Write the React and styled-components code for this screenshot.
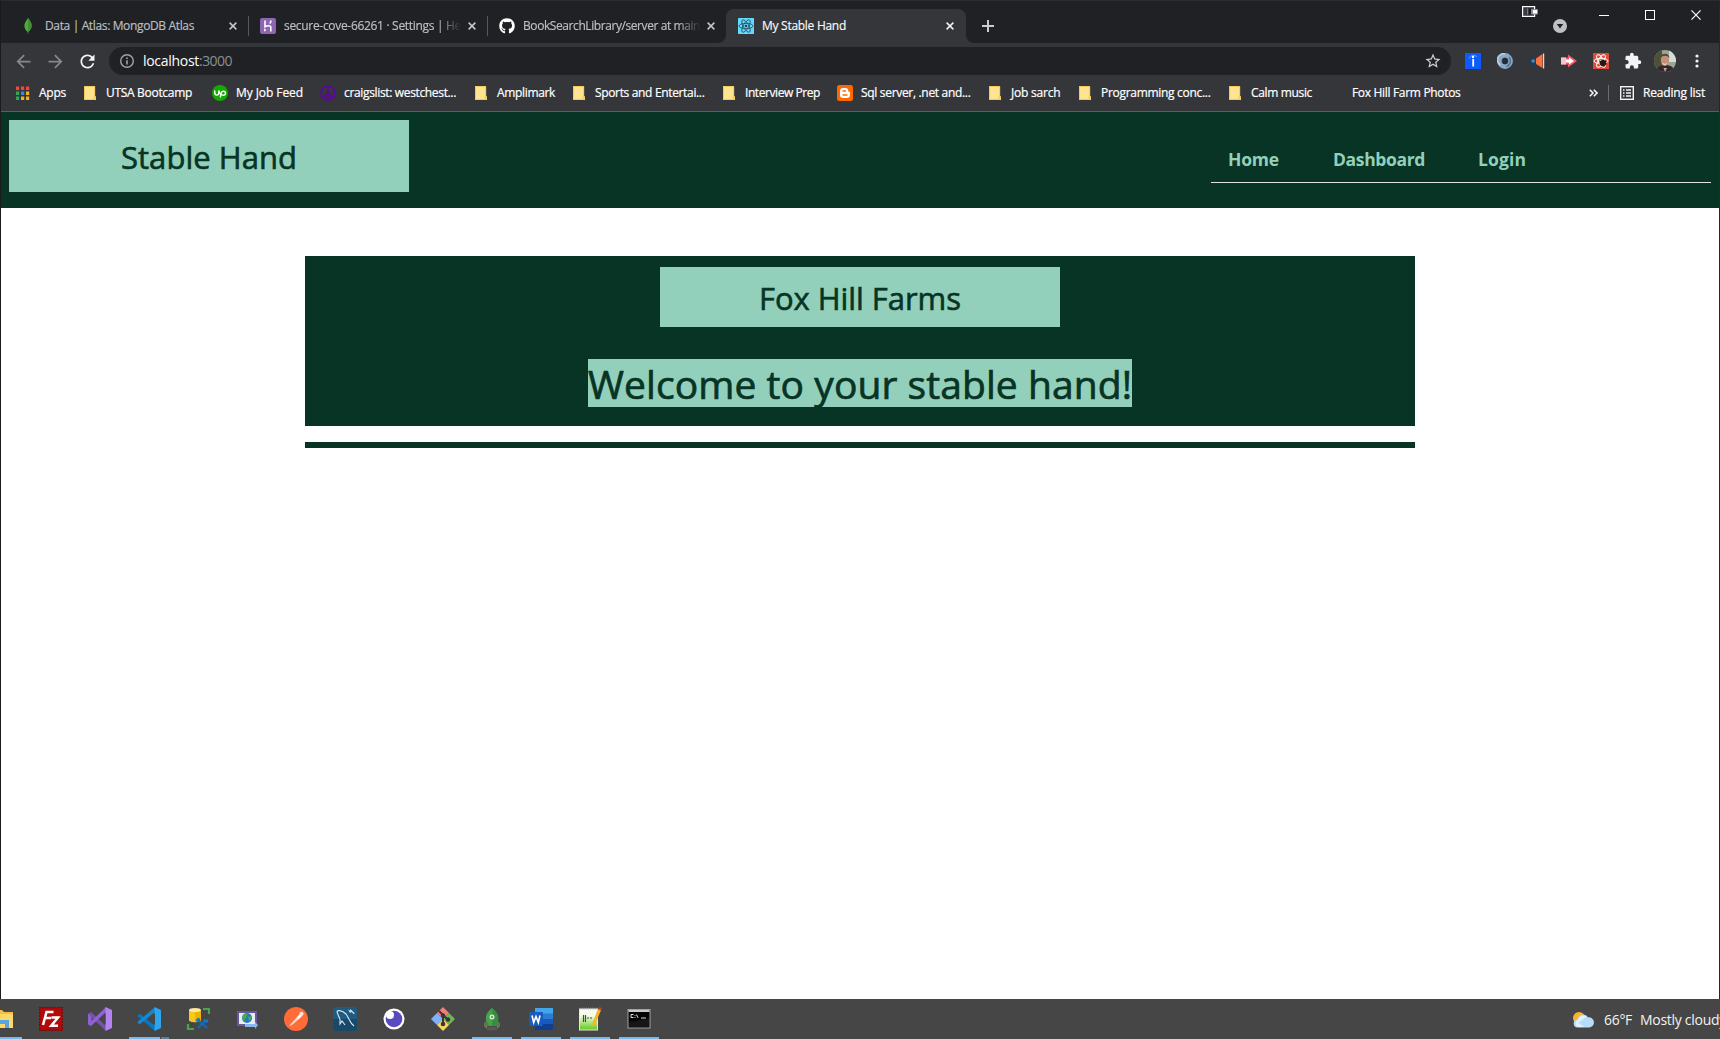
import React, { useLayoutEffect, useRef, useState } from "react";
import styled, { createGlobalStyle } from "styled-components";
import { FaGithub } from "react-icons/fa";
import { MdExtension, MdStarBorder, MdRefresh, MdArrowBack, MdArrowForward } from "react-icons/md";

const GlobalStyle = createGlobalStyle`
  * { box-sizing: border-box; }
  html, body { margin: 0; height: 100%; overflow: hidden; background: #fff; }
  body, #root { font-family: "Segoe UI", "Open Sans", "Noto Sans", sans-serif; }
  svg { display: block; flex: none; }
`;

const FitSpan = styled.span`
  display: inline-block;
  white-space: pre;
`;

/* Tracks the text so that it is as wide as the column made for it. */
function Fit({ width, children }) {
  const ref = useRef(null);
  const [tracking, setTracking] = useState(0);
  useLayoutEffect(() => {
    const natural = ref.current.getBoundingClientRect().width;
    setTracking((width - natural) / String(children).length);
  }, [width, children]);
  return (
    <FitSpan ref={ref} style={{ letterSpacing: `${tracking}px` }}>
      {children}
    </FitSpan>
  );
}

const Screen = styled.div`
  width: 1720px;
  height: 1039px;
  display: flex;
  flex-direction: column;
  overflow: hidden;
`;

const Browser = styled.div`
  height: 999px;
  display: flex;
  flex-direction: column;
  border-left: 1px solid #1b1b1b;
  border-right: 1px solid #1c2a33;
  background: #fff;
`;

/* ---------- tab strip ---------- */
const TabStrip = styled.div`
  height: 43px;
  flex: none;
  display: flex;
  align-items: stretch;
  background: #202124;
  border-top: 1px solid #2b2c2b;
  padding-left: 9px;
`;

const Tab = styled.div`
  position: relative;
  width: ${(p) => p.$width}px;
  margin-top: 8px;
  display: flex;
  align-items: center;
  padding: ${(p) => p.$pad};
  font-size: 12px;
  line-height: 16px;
  color: ${(p) => (p.$active ? "#f8f9fa" : "#bcc0c4")};
  background: ${(p) => (p.$active ? "#35363a" : "transparent")};
  border-radius: 8px 8px 0 0;
`;

const TabFoot = styled.svg`
  position: absolute;
  bottom: 0;
  ${(p) => (p.$right ? "right: -8px; transform: scaleX(-1);" : "left: -8px;")}
`;

const TabTitle = styled.div`
  width: ${(p) => p.$width}px;
  margin-left: ${(p) => p.$gap}px;
  overflow: hidden;
  white-space: nowrap;
  -webkit-text-stroke: 0.15px currentColor;
  ${(p) => p.$fade && "mask-image: linear-gradient(90deg, #000 calc(100% - 24px), transparent);"}
`;

const TabClose = styled.div`
  margin-left: auto;
  color: ${(p) => (p.$active ? "#f1f3f4" : "#c4c7ca")};
`;

const Divider = styled.div`
  width: 1px;
  height: 20px;
  margin-top: 15px;
  background: #55575b;
`;

const NewTab = styled.div`
  margin-left: 16px;
  display: flex;
  align-items: center;
  padding-top: 7px;
  color: #c9ccd0;
`;

const WindowControls = styled.div`
  margin-left: auto;
  display: flex;
  align-items: flex-start;
`;

const ControlSlot = styled.div`
  width: ${(p) => p.$width}px;
  padding-top: ${(p) => p.$top}px;
  color: #fff;
`;

/* ---------- toolbar ---------- */
const Toolbar = styled.div`
  height: 36px;
  flex: none;
  display: flex;
  align-items: center;
  padding: 0 6px 0 12px;
  background: #35363a;
  color: #82858a;
`;

const NavButton = styled.div`
  width: 32px;
  flex: none;
  color: ${(p) => (p.$on ? "#f1f3f4" : "#85878b")};
`;

const Omnibox = styled.div`
  width: 1342px;
  flex: none;
  height: 28px;
  border-radius: 14px;
  background: #202124;
  display: flex;
  align-items: center;
  padding: 0 9px 0 11px;
  font-size: 14px;
  line-height: 20px;
  color: #fff;
`;

const Address = styled.div`
  margin-left: 9px;
  display: flex;
`;

const Muted = styled.span`
  color: #8b8f94;
`;

const StarSlot = styled.div`
  margin-left: auto;
  color: #cfd2d5;
`;

const Extensions = styled.div`
  margin-left: 6px;
  display: flex;
  flex: none;
`;

const ExtensionSlot = styled.div`
  width: 32px;
  height: 24px;
  display: flex;
  align-items: center;
  justify-content: center;
  color: #f1f3f4;
`;

/* ---------- bookmarks ---------- */
const BookmarksBar = styled.div`
  height: 33px;
  flex: none;
  display: flex;
  align-items: center;
  padding: 0 14px 5px 14px;
  background: #35363a;
  border-bottom: 1px solid #5c5d60;
  font-size: 12px;
  line-height: 16px;
  color: #fff;
  -webkit-text-stroke: 0.2px currentColor;
`;

const Bookmark = styled.div`
  width: ${(p) => p.$width}px;
  display: flex;
  align-items: center;
  white-space: nowrap;
`;

const BookmarkIcon = styled.div`
  width: 16px;
  height: 16px;
  margin-right: 8px;
  display: flex;
  align-items: center;
  justify-content: center;
`;

const BarEnd = styled.div`
  margin-left: auto;
  display: flex;
  align-items: center;
`;

const BarLine = styled.div`
  width: 1px;
  height: 16px;
  margin: 0 11px 0 10px;
  background: #6a6c6f;
`;

const ReadingLabel = styled.div`
  margin-left: 9px;
`;

/* ---------- page ---------- */
const Header = styled.header`
  height: 96px;
  flex: none;
  display: flex;
  justify-content: space-between;
  align-items: flex-start;
  padding: 8px;
  background: #073424;
`;

const Brand = styled.h1`
  width: 400px;
  height: ${(p) => p.$height}px;
  margin: 0;
  padding-top: ${(p) => p.$top}px;
  background: #93d0bb;
  color: #073424;
  font-size: 31px;
  font-weight: 500;
  line-height: 38px;
  text-align: center;
  -webkit-text-stroke: 0.6px currentColor;
`;

const Nav = styled.nav`
  width: 500px;
  height: 63px;
  display: flex;
  align-items: flex-end;
  padding: 0 17px 11px;
  border-bottom: 1px solid #dee2e6;
  color: #93d0bb;
  font-size: 17.5px;
  font-weight: 700;
  line-height: 24px;
`;

const NavLink = styled.a`
  margin-right: ${(p) => p.$gap}px;
`;

const Main = styled.main`
  flex: 1;
  display: flex;
  flex-direction: column;
  align-items: center;
  padding-top: 48px;
`;

const Hero = styled.section`
  width: 1110px;
  height: 170px;
  display: flex;
  flex-direction: column;
  align-items: center;
  padding-top: 11px;
  background: #073424;
`;

const Welcome = styled.h2`
  height: 48px;
  margin: 32px 0 0;
  background: #93d0bb;
  color: #073424;
  font-size: 39px;
  font-weight: 500;
  line-height: 50px;
  -webkit-text-stroke: 0.7px currentColor;
`;

const Rule = styled.div`
  width: 1110px;
  height: 6px;
  margin-top: 16px;
  background: #073424;
`;

/* ---------- taskbar ---------- */
const Taskbar = styled.div`
  height: 40px;
  flex: none;
  display: flex;
  background: #464646;
  color: #f2f2f2;
`;

const Apps = styled.div`
  display: flex;
  margin-left: -22.5px;
`;

const AppSlot = styled.div`
  width: 49px;
  height: 40px;
  display: flex;
  flex-direction: column;
  align-items: center;
  justify-content: space-between;
  padding-top: 8px;
`;

const Running = styled.div`
  width: 40px;
  height: 2px;
  background: ${(p) =>
    p.$state === "many"
      ? "linear-gradient(90deg, #76b9ed 31px, #464646 31px, #464646 32px, #5a7d99 32px)"
      : p.$state
      ? "#76b9ed"
      : "transparent"};
`;

const Weather = styled.div`
  width: 147px;
  margin-left: auto;
  display: flex;
  align-items: center;
  padding-top: 2px;
  font-size: 14px;
  line-height: 20px;
  white-space: nowrap;
  overflow: hidden;
`;

const Reading = styled.div`
  margin-left: ${(p) => p.$gap}px;
`;

/* ---------- drawings ---------- */
const Cross = ({ size = 8 }) => (
  <svg width={size} height={size} viewBox="0 0 9 9" stroke="currentColor" strokeWidth="1.7">
    <path d="M.7.7l7.6 7.6M8.3.7L.7 8.3" />
  </svg>
);

const Leaf = () => (
  <svg width="16" height="16" viewBox="0 0 16 16">
    <path d="M8 0C10.5 3 12 5.5 11.600 8.500 11.300 11 9.500 12.800 8.300 13.800L8.200 16H7.800L7.600 13.800C6.300 12.800 4.700 11 4.400 8.500 4.100 5.500 6 3 8 0z" fill="#4faa41" />
    <path d="M8 0C10.500 3 12 5.500 11.600 8.500 11.300 11 9.500 12.800 8.300 13.800z" fill="#3f8f36" />
  </svg>
);

const Heroku = () => (
  <svg width="16" height="16" viewBox="0 0 16 16">
    <rect width="16" height="16" rx="2" fill="#8c66b3" />
    <path d="M5 2.500v6.200c2-1 5.800-1.800 5.800.6v4.200M11 2.500c0 1.300-.5 2.200-1.200 3" fill="none" stroke="#fff" strokeWidth="1.600" />
    <path d="M4.200 10.200l2.200 1.800-2.200 1.800z" fill="#fff" />
  </svg>
);

const Atom = ({ bg, fg, nut }) => (
  <svg width="16" height="16" viewBox="0 0 16 16">
    <rect width="16" height="16" rx=".6" fill={bg} />
    <g fill="none" stroke={fg} strokeWidth={nut ? 1 : 0.8}>
      <ellipse cx="8" cy="8" rx="7" ry="2.700" />
      <ellipse cx="8" cy="8" rx="7" ry="2.700" transform="rotate(60 8 8)" />
      <ellipse cx="8" cy="8" rx="7" ry="2.700" transform="rotate(120 8 8)" />
    </g>
    <circle cx="8" cy="8" r="1.300" fill={fg} />
    {nut && <path d="M7 8l3-1.500 3 1.500.6 3-2.500 2.500-3-.5L6.500 11z" fill="#2b1512" />}
  </svg>
);

const Folder = () => (
  <svg width="16" height="16" viewBox="0 0 16 16">
    <path d="M2 1h11v10.500h1V15H2z" fill="#ffe490" />
    <path d="M2.500 1.500h10.200v10M2.500 1.500v13h10" fill="none" stroke="#f3ca58" />
    <path d="M11.500 11.200h2.300v3.600h-2.300z" fill="#f6cf54" />
  </svg>
);

const AppsGrid = () => (
  <svg width="16" height="16" viewBox="0 0 16 16">
    {["#f3473b", "#f3473b", "#f3473b", "#34a35a", "#2f86f5", "#f8b01a", "#34a35a", "#f8b01a", "#f8b01a"].map((c, i) => (
      <rect key={i} x={1 + (i % 3) * 5} y={1.500 + Math.floor(i / 3) * 5} width="3.200" height="3.500" fill={c} />
    ))}
  </svg>
);

const UpMark = () => (
  <svg width="16" height="16" viewBox="0 0 16 16">
    <circle cx="8" cy="8" r="8" fill="#14a800" />
    <path d="M2.800 5.500v2.600a2 2 0 0 0 4 0V5.500c.6 2 1.500 3.500 2.300 4.300M8.300 12.500l1-4.300a2.100 2.100 0 1 1 1.900 2.100c-1.300 0-2.200-1-3-2.300" fill="none" stroke="#fff" strokeWidth="1.400" />
  </svg>
);

const Peace = () => (
  <svg width="16" height="16" viewBox="0 0 16 16" fill="none" stroke="#5a0a94" strokeWidth="1.800">
    <circle cx="8" cy="8" r="7" />
    <path d="M8 1v14M8 8l-5 5M8 8l5 5" />
  </svg>
);

const Blogger = () => (
  <svg width="16" height="16" viewBox="0 0 16 16">
    <rect width="16" height="16" rx="2.500" fill="#ff6a00" />
    <path d="M6 3h2.600A2.700 2.700 0 0 1 11.300 5.700c0 .9.300 1.100 1 1.100.5 0 .7.300.7.700V10a3 3 0 0 1-3 3H6a3 3 0 0 1-3-3V6a3 3 0 0 1 3-3z" fill="#fff" />
    <path d="M6 6h2.500M6 10h4" stroke="#ff6a00" strokeWidth="1.400" strokeLinecap="round" />
  </svg>
);

const Wallet = () => (
  <svg width="16" height="12" viewBox="0 0 16 12">
    <rect x=".6" y=".6" width="12" height="9.800" fill="#3a3b42" stroke="#fff" strokeWidth="1.200" />
    <path d="M5 2.500h1.500v6H5z" fill="#77788a" />
    <path d="M6.500 2.500H9v6H6.500z" fill="#17181c" />
    <rect x="9" y="3" width="7" height="5.500" rx="1" fill="#8c8d9e" />
    <rect x="11" y="4" width="4" height="3.500" fill="#fff" />
  </svg>
);

const DownBadge = () => (
  <svg width="14" height="14" viewBox="0 0 14 14">
    <circle cx="7" cy="7" r="7" fill="#bdc1c6" />
    <path d="M3.800 5h6.400L7 9.400z" fill="#202124" />
  </svg>
);

const InfoMark = () => (
  <svg width="14" height="14" viewBox="0 0 14 14" fill="none" stroke="#a0a4a8" strokeWidth="1.400">
    <circle cx="7" cy="7" r="6.300" />
    <path d="M7 6.200v4.300M7 3.500v1.500" strokeWidth="1.600" />
  </svg>
);

const BlueInfo = () => (
  <svg width="16" height="16" viewBox="0 0 16 16">
    <rect width="16" height="16" fill="#0a5cff" />
    <path d="M8.200 6v7.500" stroke="#fff" strokeWidth="1.800" />
    <circle cx="8" cy="4" r="1.200" fill="#fff" />
    <path d="M4 5.500C5.500 1.800 10 1.500 12 4" fill="none" stroke="#86b4ff" strokeWidth=".8" />
  </svg>
);

const Ring = () => (
  <svg width="16" height="16" viewBox="0 0 16 16">
    <ellipse cx="8" cy="8" rx="5.600" ry="5.600" fill="none" stroke="#8ba9c6" strokeWidth="4.600" />
    <path d="M3.500 12A6 6 0 0 1 8 1" fill="none" stroke="#b7cce0" strokeWidth="1.800" />
    <path d="M12 4a6 6 0 0 1-2.500 9.600" fill="none" stroke="#56789f" strokeWidth="1.800" />
    <ellipse cx="8" cy="8" rx="2.300" ry="3.300" fill="#202c39" />
  </svg>
);

const Megaphone = () => (
  <svg width="16" height="16" viewBox="0 0 16 16">
    <path d="M1 5h6v6.500H6.500V15H4.500L3.500 11H1z" fill="#173f60" />
    <circle cx="4.200" cy="8" r="1.800" fill="#5d829e" />
    <path d="M7 5.500L13.500 1v14L7 11z" fill="#ff713d" />
    <path d="M14 .5h1.200v15H14z" fill="#e2d8d5" />
  </svg>
);

const RedArrow = () => (
  <svg width="16" height="16" viewBox="0 0 16 16">
    <path d="M0 4.500h7V1.500l9 6.500-9 6.500V11.500H0z" fill="#ef5a66" />
    <path d="M0 4.500h5v7H0z" fill="#fbc4c9" />
    <path d="M5 6.500h3V4.500l5 3.500-5 3.500V9.500H5z" fill="#fff" />
  </svg>
);

const Avatar = () => (
  <svg width="22" height="22" viewBox="0 0 22 22">
    <defs>
      <clipPath id="face"><circle cx="11" cy="11" r="11" /></clipPath>
    </defs>
    <g clipPath="url(#face)">
      <rect width="22" height="22" fill="#9aa593" />
      <path d="M0 0h8v22H0z" fill="#4c5138" />
      <path d="M15 0h7v12h-7z" fill="#d3dcd9" />
      <path d="M2 22c1-6 5-7 9-7s9 1 10 7z" fill="#36272b" />
      <ellipse cx="10.800" cy="10" rx="4" ry="6" fill="#c68f78" />
      <path d="M6.500 8c0-5 8.500-6 9 0-2-3-7-3-9 0z" fill="#51453d" />
      <path d="M8 12.800c2 1.500 4 1.500 5.500 0-.5 2.500-4.500 3-5.500 0z" fill="#f2e4dc" />
      <path d="M9.500 18l1.500 4 2-4z" fill="#b9b0b0" />
    </g>
  </svg>
);

const Dots = () => (
  <svg width="4" height="14" viewBox="0 0 4 14" fill="#f1f3f4">
    <circle cx="2" cy="2" r="1.600" /><circle cx="2" cy="7" r="1.600" /><circle cx="2" cy="12" r="1.600" />
  </svg>
);

const Chevrons = () => (
  <svg width="9" height="8" viewBox="0 0 9 8" fill="none" stroke="#f1f3f4" strokeWidth="1.600">
    <path d="M.8.8L4 4 .8 7.200M4.800.8L8 4 4.800 7.200" />
  </svg>
);

const ListIcon = () => (
  <svg width="14" height="14" viewBox="0 0 14 14">
    <rect x=".7" y=".7" width="12.600" height="12.600" fill="none" stroke="#f1f3f4" strokeWidth="1.400" />
    <path d="M3 4h1.500M6 4h5M3 7h1.500M6 7h5M3 10h1.500M6 10h5" stroke="#f1f3f4" strokeWidth="1.500" />
  </svg>
);

const Icon24 = ({ children }) => <svg width="24" height="24" viewBox="0 0 24 24">{children}</svg>;

const Explorer = () => (
  <Icon24>
    <path d="M0 3h12l2 2h9v16H0z" fill="#f5bd42" />
    <path d="M0 7h23v14H0z" fill="#ffd869" />
    <path d="M5 13h14v8h-4v-4H9v4H5z" fill="#55a5de" />
  </Icon24>
);

const Filezilla = () => (
  <Icon24>
    <rect x=".7" y=".7" width="22.600" height="22.600" fill="#b30a0a" stroke="#7d0707" strokeWidth="1.300" strokeDasharray="2 1" />
    <g fill="none" stroke="#fff" strokeWidth="2.500">
      <path d="M4 18L7.500 5h7M6.200 11h6" />
      <path d="M12.500 10.500H19L12.200 18.800H19" />
    </g>
  </Icon24>
);

const VisualStudio = () => (
  <Icon24>
    <path d="M0 7l3-2 15 14v5L0 7z" fill="#7850b4" />
    <path d="M0 6.500v11L3 19 18 5V0L3.500 14V10z" fill="#8f61d4" />
    <path d="M17.500 0L24 3v18l-6.500 3z" fill="#b383f0" />
    <path d="M17.500 7v10L12 12z" fill="#464646" />
  </Icon24>
);

const VSCode = () => (
  <Icon24>
    <path d="M2.500 6.500L18 19v5L.3 9z" fill="#0878be" />
    <path d="M2.500 17.500L18 5V0L.3 15z" fill="#1687d1" />
    <path d="M17.500 0L24 3v18l-6.500 3z" fill="#2ca5ef" />
    <path d="M18 6.500v11L11 12z" fill="#464646" />
  </Icon24>
);

const DataTools = () => (
  <Icon24>
    <path d="M3 3v10c0 3 12 3 12 0V3z" fill="#f8c91c" />
    <path d="M9 5v10c3 0 6-.5 6-2V3z" fill="#edb300" />
    <ellipse cx="9" cy="3" rx="6" ry="2" fill="#ffeba0" />
    <path d="M17 2h6v5M2 17v5h6" fill="none" stroke="#4aa44d" strokeWidth="2.200" />
    <path d="M12 13l9 8M20 13l-8 8" stroke="#1569b0" strokeWidth="2.300" />
    <path d="M9.500 13l3-2.500 2 2-3 3zM18 11.500l2 1.500 2.500-1-.5 3-2 1-2.500-2z" fill="#1c75bf" />
  </Icon24>
);

const RemoteGlobe = () => (
  <Icon24>
    <rect x="2" y="4" width="20" height="15" fill="#6d55a5" />
    <rect x="4" y="6" width="16" height="11" fill="#e8edf5" />
    <circle cx="12" cy="11" r="5" fill="#2a76c6" />
    <path d="M8 8c3-3 5-1 4 1s-3 3-2 5c-3-1-3-4-2-6zM13 10l3-1c1 2 0 4-2 5z" fill="#46ad4a" />
    <path d="M10 17h10v-2l3 3-3 4v-2H10z" fill="#8ab7ed" />
  </Icon24>
);

const Postman = () => (
  <Icon24>
    <circle cx="12" cy="12" r="12" fill="#ff6c37" />
    <path d="M5 19l8-9 2 2-7 6z" fill="#ffd6c7" />
    <path d="M13 10l3-3 2 2-3.500 3.500z" fill="#fff" />
    <circle cx="17.500" cy="6.800" r="2.100" fill="#ffe8df" />
  </Icon24>
);

const MySQL = () => (
  <Icon24>
    <rect width="24" height="24" rx="2.500" fill="#205b82" />
    <path d="M0 12h24v9a3 3 0 0 1-3 3H3a3 3 0 0 1-3-3z" fill="#184968" />
    <path d="M4 4c3-1 6 0 9 3 3 4 4 9 8 12M4 4c0 4 3 6 3 9v4l2-3 3 4" fill="none" stroke="#dce9f1" strokeWidth="1.100" />
    <path d="M15 2.500l2 1 .5-1.500 4.500 4.500-1.500.5-2-2-1.500 1z" fill="#c8dbe7" />
  </Icon24>
);

const Insomnia = () => (
  <Icon24>
    <circle cx="12" cy="12" r="10.500" fill="#fff" />
    <circle cx="12" cy="12" r="8.300" fill="#5849be" />
    <circle cx="8" cy="8" r="4" fill="#fff" />
  </Icon24>
);

const GitIcon = () => (
  <Icon24>
    <path d="M12 0l6 6-6 6-6-6z" fill="#f37e78" />
    <path d="M18 6l6 6-6 6-6-6z" fill="#72b653" />
    <path d="M6 6l6 6-6 6-6-6z" fill="#80b2fc" />
    <path d="M12 12l6 6-6 6-6-6z" fill="#f7d65c" />
    <path d="M8 4l4 4v10M12 8l5 5" fill="none" stroke="#3b3535" strokeWidth="2" />
    <g fill="#3b3535"><circle cx="12" cy="8.500" r="2.200" /><circle cx="12" cy="17" r="2.300" /><circle cx="17" cy="12.500" r="2.200" /></g>
  </Icon24>
);

const Rocket = () => (
  <Icon24>
    <ellipse cx="12" cy="21.500" rx="6" ry="2" fill="#575757" />
    <path d="M8 12l-4 4v4l5-1zM16 12l4 4v4l-5-1z" fill="#4f7d53" />
    <path d="M12 1c5 4 7 8 6 12l-3 6H9l-3-6C5 9 7 5 12 1z" fill="#45a44a" />
    <path d="M12 1v18h3l3-6c1-4-1-8-6-12z" fill="#388e3f" />
    <circle cx="12" cy="10" r="2.500" fill="#d7efdd" /><circle cx="12" cy="10" r="1.300" fill="#60a96d" />
    <path d="M5 20l2-1v2zM19 20l-2-1v2z" fill="#e56a43" />
  </Icon24>
);

const WordIcon = () => (
  <Icon24>
    <path d="M6 1h18v6H6z" fill="#42a5ee" /><path d="M6 6.500h18v6H6z" fill="#2b7cd3" />
    <path d="M6 12h18v5.500H6z" fill="#185abd" /><path d="M6 17h18v6H6z" fill="#103f91" />
    <rect y="5" width="14" height="14" rx="1" fill="#185abd" />
    <path d="M3 8.500l1.700 7L7 9.500l2.300 6 1.700-7" fill="none" stroke="#fff" strokeWidth="1.700" />
  </Icon24>
);

const Notepad = () => (
  <Icon24>
    <defs>
      <linearGradient id="note" x2="0" y2="1"><stop offset=".3" stopColor="#f8fbee" /><stop offset="1" stopColor="#63c916" /></linearGradient>
    </defs>
    <rect x="1.500" y="2" width="18" height="21" fill="url(#note)" stroke="#e7e7dd" />
    <path d="M2 1.500h17" stroke="#a5a5a5" strokeWidth="1.500" strokeDasharray="1 1" />
    <path d="M5.500 15V8M7.500 8v7M9 11h2M12 11h2" fill="none" stroke="#3c5134" strokeWidth="1.200" />
    <path d="M20 2l3 1-6 15-3 1 .5-3z" fill="#f4b52c" /><path d="M20 2l1-2 3 1-1 2z" fill="#b94040" />
  </Icon24>
);

const Terminal = () => (
  <Icon24>
    <rect x="1" y="2.500" width="22" height="18.500" fill="#050505" stroke="#a3a3a3" />
    <path d="M1.500 4h21" stroke="#cbcbcb" strokeWidth="2" />
    <path d="M6.500 7.500H4v3h2.500M8 8v.8M8 10v.8M9.500 7.500l1.500 3.300M14 11h5" fill="none" stroke="#ddd" />
    <path d="M2 15c5 0 14-3 20-4v9H2z" fill="#222" opacity=".6" />
  </Icon24>
);

const Cloud = () => (
  <svg width="21" height="16" viewBox="0 0 21 16">
    <circle cx="6" cy="6" r="6" fill="#f7b42c" />
    <path d="M5 15.500a4 4 0 0 1-.6-8A5.800 5.800 0 0 1 15 5.200a5 5 0 0 1 1.500 10.300z" fill="#b5dcf8" />
    <path d="M5 15a3.700 3.700 0 0 1 0-7 5.500 5.500 0 0 1 9-3c-3 .5-5 4-8 5 0 2 3 3 5 5z" fill="#e0f2ff" />
  </svg>
);

const tabs = [
  { title: "Data | Atlas: MongoDB Atlas", icon: <Leaf />, width: 238, pad: "0 11px 0 10px", gap: 9, text: 149, view: 176 },
  { title: "secure-cove-66261 · Settings | He", icon: <Heroku />, width: 238, pad: "0 11px 0 11px", gap: 8, text: 177, view: 177, fade: true },
  { title: "BookSearchLibrary/server at main", icon: <FaGithub size={16} color="#fff" />, width: 238, pad: "0 11px 0 11px", gap: 8, text: 177, view: 178, fade: true },
  { title: "My Stable Hand", icon: <Atom bg="#61dafb" fg="#24465a" />, width: 240, pad: "0 12px 0 12px", gap: 8, text: 84, view: 180, active: true },
];

const bookmarks = [
  ["Apps", <AppsGrid />, 67, 27],
  ["UTSA Bootcamp", <Folder />, 130, 86],
  ["My Job Feed", <UpMark />, 108, 67],
  ["craigslist: westchest...", <Peace />, 153, 112],
  ["Amplimark", <Folder />, 98, 58],
  ["Sports and Entertai...", <Folder />, 150, 109.5],
  ["Interview Prep", <Folder />, 116, 75],
  ["Sql server, .net and...", <Blogger />, 150, 109.5],
  ["Job sarch", <Folder />, 90, 49.500],
  ["Programming conc...", <Folder />, 150, 109.5],
  ["Calm music", <Folder />, 101, 61],
  ["Fox Hill Farm Photos", null, 140, 108.5],
];

const extensions = [
  <BlueInfo />, <Ring />, <Megaphone />, <RedArrow />,
  <Atom bg="#dd4b3a" fg="#fff" nut />, <MdExtension size={18} />, <Avatar />, <Dots />,
];

const apps = [
  [<Explorer />, "one"], [<Filezilla />], [<VisualStudio />], [<VSCode />, "many"], [<DataTools />],
  [<RemoteGlobe />], [<Postman />], [<MySQL />], [<Insomnia />], [<GitIcon />],
  [<Rocket />, "one"], [<WordIcon />, "one"], [<Notepad />, "one"], [<Terminal />, "one"],
];

export default function App() {
  return (
    <Screen>
      <GlobalStyle />
      <Browser>
        <TabStrip>
          {tabs.map((t, i) => (
            <React.Fragment key={t.title}>
              <Tab $width={t.width} $pad={t.pad} $active={t.active}>
                {t.active && (
                  <>
                    <TabFoot width="8" height="8"><path d="M8 0v8H0a8 8 0 0 0 8-8z" fill="#35363a" /></TabFoot>
                    <TabFoot $right width="8" height="8"><path d="M8 0v8H0a8 8 0 0 0 8-8z" fill="#35363a" /></TabFoot>
                  </>
                )}
                {t.icon}
                <TabTitle $width={t.view} $gap={t.gap} $fade={t.fade}><Fit width={t.text}>{t.title}</Fit></TabTitle>
                <TabClose $active={t.active}><Cross /></TabClose>
              </Tab>
              {i < 2 && <Divider />}
            </React.Fragment>
          ))}
          <NewTab>
            <svg width="12" height="12" stroke="currentColor" strokeWidth="2"><path d="M6 0v12M0 6h12" /></svg>
          </NewTab>
          <WindowControls>
            <ControlSlot $width={31} $top={5}><Wallet /></ControlSlot>
            <ControlSlot $width={46} $top={18}><DownBadge /></ControlSlot>
            <ControlSlot $width={46} $top={14}><svg width="10" height="1"><rect width="10" height="1" fill="#fff" /></svg></ControlSlot>
            <ControlSlot $width={46} $top={9}><svg width="10" height="10"><rect x=".5" y=".5" width="9" height="9" fill="none" stroke="#fff" /></svg></ControlSlot>
            <ControlSlot $width={28} $top={9}><svg width="10" height="10" viewBox="0 0 11 11" stroke="#fff" strokeWidth="1.300"><path d="M.5.5l10 10M10.500.5l-10 10" /></svg></ControlSlot>
          </WindowControls>
        </TabStrip>
        <Toolbar>
          <NavButton><MdArrowBack size={21} /></NavButton>
          <NavButton><MdArrowForward size={21} /></NavButton>
          <NavButton $on><MdRefresh size={21} /></NavButton>
          <Omnibox>
            <InfoMark />
            <Address>
              <Fit width={56}>localhost</Fit>
              <Muted><Fit width={33}>:3000</Fit></Muted>
            </Address>
            <StarSlot><MdStarBorder size={18} /></StarSlot>
          </Omnibox>
          <Extensions>
            {extensions.map((e, i) => <ExtensionSlot key={i}>{e}</ExtensionSlot>)}
          </Extensions>
        </Toolbar>
        <BookmarksBar>
          {bookmarks.map(([label, icon, width, text]) => (
            <Bookmark key={label} $width={width}>
              <BookmarkIcon>{icon}</BookmarkIcon>
              <Fit width={text}>{label}</Fit>
            </Bookmark>
          ))}
          <BarEnd>
            <Chevrons />
            <BarLine />
            <ListIcon />
            <ReadingLabel><Fit width={62}>Reading list</Fit></ReadingLabel>
          </BarEnd>
        </BookmarksBar>
        <Header>
          <Brand $height={72} $top={18}><Fit width={176}>Stable Hand</Fit></Brand>
          <Nav>
            <NavLink $gap={54}><Fit width={51}>Home</Fit></NavLink>
            <NavLink $gap={53}><Fit width={92}>Dashboard</Fit></NavLink>
            <NavLink $gap={0}><Fit width={48}>Login</Fit></NavLink>
          </Nav>
        </Header>
        <Main>
          <Hero>
            <Brand as="h2" $height={60} $top={12}><Fit width={202}>Fox Hill Farms</Fit></Brand>
            <Welcome><Fit width={544}>Welcome to your stable hand!</Fit></Welcome>
          </Hero>
          <Rule />
        </Main>
      </Browser>
      <Taskbar>
        <Apps>
          {apps.map(([icon, state], i) => (
            <AppSlot key={i}>
              {icon}
              <Running $state={state} />
            </AppSlot>
          ))}
        </Apps>
        <Weather>
          <Cloud />
          <Reading $gap={10}><Fit width={28}>66°F</Fit></Reading>
          <Reading $gap={8}><Fit width={86}>Mostly cloudy</Fit></Reading>
        </Weather>
      </Taskbar>
    </Screen>
  );
}
